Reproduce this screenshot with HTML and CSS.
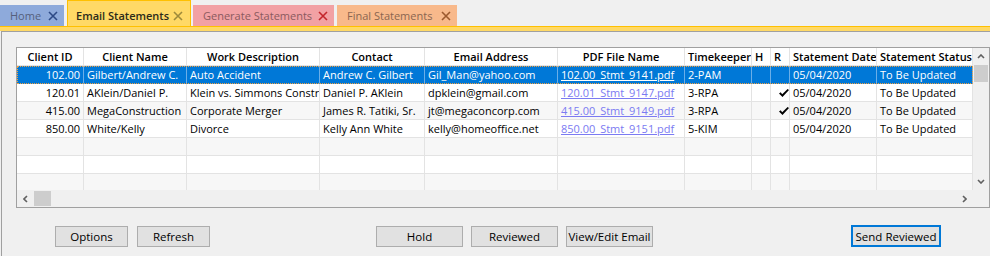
FILE: index.html
```html
<!DOCTYPE html>
<html lang="en">
<head>
    <meta charset="UTF-8">
    <title>Email Statements</title>
    <link rel="stylesheet" href="styles.css">
</head>
<body>

    <!-- Document tabs -->
    <div class="tabs">
        <div class="tab tab-home">
            <span class="tab-label">Home</span>
            <svg class="tab-close" viewBox="0 0 10 10"><path d="M1 1 L9 9 M9 1 L1 9"/></svg>
        </div>
        <div class="tab tab-email active">
            <span class="tab-label">Email Statements</span>
            <svg class="tab-close" viewBox="0 0 10 10"><path d="M1 1 L9 9 M9 1 L1 9"/></svg>
        </div>
        <div class="tab tab-generate">
            <span class="tab-label">Generate Statements</span>
            <svg class="tab-close" viewBox="0 0 10 10"><path d="M1 1 L9 9 M9 1 L1 9"/></svg>
        </div>
        <div class="tab tab-final">
            <span class="tab-label">Final Statements</span>
            <svg class="tab-close" viewBox="0 0 10 10"><path d="M1 1 L9 9 M9 1 L1 9"/></svg>
        </div>
    </div>
    <div class="tab-strip"></div>

    <!-- Main panel -->
    <div class="panel">
        <div class="grid-box">
            <div class="grid-body">
                <div class="row head">
                    <div class="cell center">Client ID</div>
                    <div class="cell center">Client Name</div>
                    <div class="cell center">Work Description</div>
                    <div class="cell center">Contact</div>
                    <div class="cell center">Email Address</div>
                    <div class="cell center">PDF File Name</div>
                    <div class="cell">Timekeeper</div>
                    <div class="cell">H</div>
                    <div class="cell">R</div>
                    <div class="cell">Statement Date</div>
                    <div class="cell">Statement Status</div>
                </div>
                <div class="row selected">
                    <div class="cell num">102.00</div>
                    <div class="cell">Gilbert/Andrew C.</div>
                    <div class="cell">Auto Accident</div>
                    <div class="cell">Andrew C. Gilbert</div>
                    <div class="cell">Gil_Man@yahoo.com</div>
                    <div class="cell"><a href="#">102.00_Stmt_9141.pdf</a></div>
                    <div class="cell">2-PAM</div>
                    <div class="cell"></div>
                    <div class="cell"></div>
                    <div class="cell">05/04/2020</div>
                    <div class="cell">To Be Updated</div>
                </div>
                <div class="row">
                    <div class="cell num">120.01</div>
                    <div class="cell">AKlein/Daniel P.</div>
                    <div class="cell">Klein vs. Simmons Construction</div>
                    <div class="cell">Daniel P. AKlein</div>
                    <div class="cell">dpklein@gmail.com</div>
                    <div class="cell"><a href="#">120.01_Stmt_9147.pdf</a></div>
                    <div class="cell">3-RPA</div>
                    <div class="cell"></div>
                    <div class="cell check"><svg viewBox="0 0 10 8"><path d="M0 4.4 L1.7 3.3 L3.2 5.3 L8.6 0 L10 0.9 L3.5 8 Z"/></svg></div>
                    <div class="cell">05/04/2020</div>
                    <div class="cell">To Be Updated</div>
                </div>
                <div class="row alt">
                    <div class="cell num">415.00</div>
                    <div class="cell">MegaConstruction</div>
                    <div class="cell">Corporate Merger</div>
                    <div class="cell">James R. Tatiki, Sr.</div>
                    <div class="cell">jt@megaconcorp.com</div>
                    <div class="cell"><a href="#">415.00_Stmt_9149.pdf</a></div>
                    <div class="cell">3-RPA</div>
                    <div class="cell"></div>
                    <div class="cell check"><svg viewBox="0 0 10 8"><path d="M0 4.4 L1.7 3.3 L3.2 5.3 L8.6 0 L10 0.9 L3.5 8 Z"/></svg></div>
                    <div class="cell">05/04/2020</div>
                    <div class="cell">To Be Updated</div>
                </div>
                <div class="row">
                    <div class="cell num">850.00</div>
                    <div class="cell">White/Kelly</div>
                    <div class="cell">Divorce</div>
                    <div class="cell">Kelly Ann White</div>
                    <div class="cell">kelly@homeoffice.net</div>
                    <div class="cell"><a href="#">850.00_Stmt_9151.pdf</a></div>
                    <div class="cell">5-KIM</div>
                    <div class="cell"></div>
                    <div class="cell"></div>
                    <div class="cell">05/04/2020</div>
                    <div class="cell">To Be Updated</div>
                </div>
                <div class="row alt empty">
                    <div class="cell"></div><div class="cell"></div><div class="cell"></div><div class="cell"></div><div class="cell"></div><div class="cell"></div><div class="cell"></div><div class="cell"></div><div class="cell"></div><div class="cell"></div><div class="cell"></div>
                </div>
                <div class="row empty">
                    <div class="cell"></div><div class="cell"></div><div class="cell"></div><div class="cell"></div><div class="cell"></div><div class="cell"></div><div class="cell"></div><div class="cell"></div><div class="cell"></div><div class="cell"></div><div class="cell"></div>
                </div>
                <div class="row alt empty">
                    <div class="cell"></div><div class="cell"></div><div class="cell"></div><div class="cell"></div><div class="cell"></div><div class="cell"></div><div class="cell"></div><div class="cell"></div><div class="cell"></div><div class="cell"></div><div class="cell"></div>
                </div>
            </div>

            <!-- Vertical scrollbar -->
            <div class="vscroll">
                <div class="sb-btn"><svg viewBox="0 0 8 5"><path d="M1 4 L4 1 L7 4"/></svg></div>
                <div class="sb-thumb"></div>
                <div class="sb-track"></div>
                <div class="sb-btn"><svg viewBox="0 0 8 5"><path d="M1 1 L4 4 L7 1"/></svg></div>
            </div>

            <!-- Horizontal scrollbar -->
            <div class="hscroll">
                <div class="sb-btn"><svg viewBox="0 0 5 8"><path d="M4 1 L1 4 L4 7"/></svg></div>
                <div class="sb-thumb"></div>
                <div class="sb-track"></div>
                <div class="sb-btn"><svg viewBox="0 0 5 8"><path d="M1 1 L4 4 L1 7"/></svg></div>
            </div>
            <div class="corner"></div>
        </div>

        <!-- Action buttons -->
        <div class="buttons">
            <div class="btn-group left">
                <button class="btn btn-small">Options</button>
                <button class="btn btn-small">Refresh</button>
            </div>
            <div class="btn-group middle">
                <button class="btn">Hold</button>
                <button class="btn">Reviewed</button>
                <button class="btn">View/Edit Email</button>
            </div>
            <div class="btn-group right">
                <button class="btn btn-default">Send Reviewed</button>
            </div>
        </div>
    </div>

</body>
</html>
```

FILE: styles.css
```css
body {
    margin: 0;
    padding: 0;
    background-color: #f0f0f0;
    font-family: "Open Sans", "Noto Sans", sans-serif;
    font-size: 11px;
    color: #000;
    width: 990px;
    height: 256px;
    overflow: hidden;
}

/* Tabs */
.tabs {
    display: flex;
    align-items: flex-end;
    height: 26px;
}
.tab {
    display: flex;
    align-items: center;
    height: 21px;
    box-sizing: border-box;
    padding: 0 6px 0 10px;
    margin-right: 3px;
}
.tab-label {
    white-space: nowrap;
}
.tab-close {
    width: 10px;
    height: 10px;
    margin-left: auto;
    fill: none;
    stroke-width: 1.6;
}
.tab-home {
    width: 64px;
    background-color: #8eaadb;
    color: #55607c;
}
.tab-home .tab-close { stroke: #2d4a86; }
.tab-email {
    width: 124px;
    height: 26px;
    padding: 4px 7px 0 8px;
    margin-right: 2px;
    background-color: #ffd966;
    border: 1px solid #ffc000;
    border-bottom: none;
    color: #2b2b1a;
    font-weight: 600;
}
.tab-email .tab-close { stroke: #9e8a3a; }
.tab-generate {
    width: 141px;
    background-color: #f2a1a4;
    color: #8a5a5e;
}
.tab-generate .tab-close { stroke: #c3262c; }
.tab-final {
    width: 120px;
    background-color: #f8b98b;
    color: #8a6650;
}
.tab-final .tab-close { stroke: #9c5a2e; }

.tab-strip {
    height: 4px;
    background-color: #ffd966;
    border-top: 1px solid #ffc000;
}

/* Panel */
.panel {
    margin-left: 1px;
    border-top: 1px solid #a0a0a0;
    border-left: 1px solid #a0a0a0;
    height: 225px;
    box-sizing: border-box;
}

/* Data grid */
.grid-box {
    margin: 15px 0 0 14px;
    width: 974px;
    height: 161px;
    box-sizing: border-box;
    border: 1px solid #a0a0a0;
    background-color: #f0f0f0;
    display: grid;
    grid-template-columns: 956px 16px;
    grid-template-rows: 142px 17px;
}
.grid-body {
    overflow: hidden;
    background-color: #fff;
}
.row {
    display: grid;
    grid-template-columns: 67px 103px 133px 105px 133px 127px 67px 19px 19px 87px 96px;
    height: 18px;
}
.row.alt {
    background-color: #f7f7f7;
}
.cell {
    box-sizing: border-box;
    border-right: 1px solid #e3e3e3;
    border-bottom: 1px solid #e3e3e3;
    padding: 0 3px;
    line-height: 17px;
    white-space: nowrap;
    overflow: hidden;
}
.row.head .cell {
    font-weight: 600;
    background-color: #fff;
}
.cell.center {
    text-align: center;
}
.cell.num {
    text-align: right;
}
.cell a {
    color: #7b7bf2;
    text-decoration: underline;
}
.cell.check svg {
    width: 10px;
    height: 8px;
    margin: 5px 0 0 5px;
    fill: #000;
}
.row.selected {
    background-color: #0078d7;
    color: #fff;
    outline: 1px dotted #f0a040;
    outline-offset: -1px;
}
.row.selected .cell {
    border-right-color: #6aaee8;
    border-bottom-color: #0078d7;
}
.row.selected .cell a {
    color: #fff;
}

/* Scrollbars */
.vscroll {
    display: flex;
    flex-direction: column;
}
.vscroll .sb-btn {
    height: 17px;
    display: flex;
    align-items: center;
    justify-content: center;
}
.vscroll .sb-btn svg {
    width: 8px;
    height: 5px;
}
.vscroll .sb-thumb {
    height: 17px;
    margin: 0 1px;
    background-color: #cdcdcd;
}
.vscroll .sb-track {
    flex: 1;
}
.hscroll {
    display: flex;
}
.hscroll .sb-btn {
    width: 17px;
    display: flex;
    align-items: center;
    justify-content: center;
}
.hscroll .sb-btn svg {
    width: 5px;
    height: 8px;
}
.hscroll .sb-thumb {
    width: 17px;
    margin: 1px 0;
    background-color: #cdcdcd;
}
.hscroll .sb-track {
    flex: 1;
}
.sb-btn svg {
    fill: none;
    stroke: #606060;
    stroke-width: 1.6;
}
.corner {
    background-color: #f0f0f0;
}

/* Buttons */
.buttons {
    display: flex;
    align-items: flex-start;
    margin-top: 18px;
}
.btn-group {
    display: flex;
}
.btn-group.left {
    margin-left: 53px;
    gap: 9px;
}
.btn-group.middle {
    margin-left: 166px;
    gap: 8px;
}
.btn-group.right {
    margin-left: 198px;
}
.btn {
    width: 87px;
    height: 21px;
    padding: 0;
    background-color: #e1e1e1;
    border: 1px solid #adadad;
    font-family: "Open Sans", "Noto Sans", sans-serif;
    font-size: 11.5px;
    color: #000;
}
.btn-small {
    width: 73px;
}
.btn-default {
    width: 90px;
    height: 22px;
    margin-top: -1px;
    border: 2px solid #0078d7;
}
```
